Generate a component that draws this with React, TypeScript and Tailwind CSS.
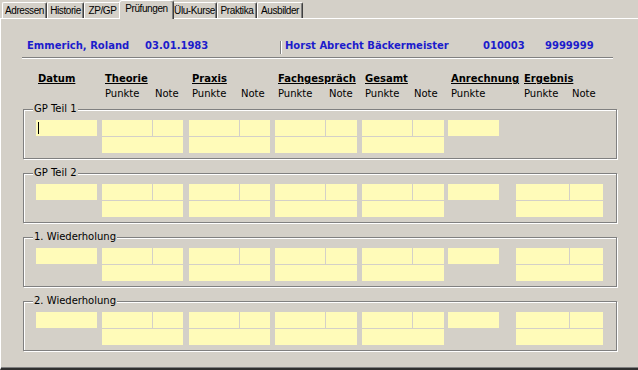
import type { ReactNode } from 'react';

const TABS = [
	{ label: 'Adressen', w: 'w-[45px]' },
	{ label: 'Historie', w: 'w-[37px]' },
	{ label: 'ZP/GP', w: 'w-[37px]' },
	{ label: 'Prüfungen', w: 'w-[55px]', active: true },
	{ label: 'Ülu-Kurse', w: 'w-[45px]' },
	{ label: 'Praktika', w: 'w-[40px]' },
	{ label: 'Ausbilder', w: 'w-[46px]' },
];

const GROUPS = [
	{ title: 'GP Teil 1', result: false, cursor: true },
	{ title: 'GP Teil 2', result: true },
	{ title: '1. Wiederholung', result: true },
	{ title: '2. Wiederholung', result: true },
];

const Cell = ({ className = '', children }: { className?: string; children?: ReactNode }) => (
	<div className={`h-[16px] bg-[#fffbb9] ${className}`}>{children}</div>
);

const Pair = ({ className, p, n }: { className: string; p: string; n: string }) => (
	<div className={`flex flex-col gap-px ${className}`}>
		<div className="flex gap-px">
			<Cell className={p} />
			<Cell className={n} />
		</div>
		<Cell />
	</div>
);

const Tabs = () => (
	<div className="h-[18px] flex items-end pl-[2px] font-['Liberation_Sans',Arial,sans-serif] text-[10px] leading-[12px] tracking-[-0.4px]">
		{TABS.map((tab) =>
			tab.active ? (
				<div
					key={tab.label}
					className={`relative z-10 -mx-[2px] -mb-px h-[19px] ${tab.w} bg-[#d4d0c8] border-t border-l border-white border-r border-r-[#404040] shadow-[inset_-1px_0_0_#808080] rounded-t-[3px] text-center pt-[2px]`}
				>
					{tab.label}
				</div>
			) : (
				<div
					key={tab.label}
					className={`h-[16px] ${tab.w} border-t border-l border-white border-r border-r-[#404040] shadow-[inset_-1px_0_0_#808080] rounded-t-[2px] text-center pt-[2px]`}
				>
					{tab.label}
				</div>
			)
		)}
	</div>
);

const App = () => {
	return (
		<div className="w-[638px] h-[370px] flex flex-col overflow-hidden bg-[#d4d0c8] text-black font-['DejaVu_Sans',sans-serif] text-[10px] leading-[12px]">
			<Tabs />

			<div className="flex-1 flex flex-col border-t border-l border-white border-b-2 border-b-[#303030] shadow-[inset_0_-1px_0_#808080]">
				{/* student / company line */}
				<div className="mt-[20px] h-[14px] flex items-center pl-[26px] font-bold text-[#1c1ccc] leading-[14px] whitespace-nowrap">
					<span className="w-[118px]">Emmerich, Roland</span>
					<span className="w-[135px]">03.01.1983</span>
					<div className="w-[2px] h-[13px] border-l border-[#808080] border-r border-r-white mt-[2px]" />
					<span className="ml-[3px] w-[198px]">Horst Abrecht Bäckermeister</span>
					<span className="w-[62px]">010003</span>
					<span>9999999</span>
				</div>
				<div className="mt-[4px] ml-[21px] w-[591px] h-[2px] border-t border-[#808080] border-b border-b-white" />

				{/* column headings */}
				<div className="mt-[14px] flex pl-[35px] font-bold underline underline-offset-[1px] whitespace-nowrap">
					<div className="w-[61px] pl-[2px]">Datum</div>
					<div className="ml-[5px] w-[81px] pl-[3px]">Theorie</div>
					<div className="ml-[6px] w-[81px] pl-[3px]">Praxis</div>
					<div className="ml-[5px] w-[82px] pl-[3px]">Fachgespräch</div>
					<div className="ml-[5px] w-[82px] pl-[3px]">Gesamt</div>
					<div className="ml-[4px] w-[51px] pl-[3px]">Anrechnung</div>
					<div className="ml-[17px] w-[87px] pl-[8px]">Ergebnis</div>
				</div>
				<div className="mt-[3px] flex pl-[35px] whitespace-nowrap">
					<div className="w-[61px]" />
					<div className="ml-[5px] w-[51px] pl-[3px]">Punkte</div>
					<div className="w-[30px] pl-[2px]">Note</div>
					<div className="ml-[6px] w-[51px] pl-[3px]">Punkte</div>
					<div className="w-[30px] pl-[1px]">Note</div>
					<div className="ml-[5px] w-[51px] pl-[3px]">Punkte</div>
					<div className="w-[31px] pl-[3px]">Note</div>
					<div className="ml-[5px] w-[51px] pl-[3px]">Punkte</div>
					<div className="w-[31px] pl-[1px]">Note</div>
					<div className="ml-[4px] w-[51px] pl-[3px]">Punkte</div>
					<div className="ml-[17px] w-[54px] pl-[8px]">Punkte</div>
					<div className="w-[33px] pl-[2px]">Note</div>
				</div>

				{/* exam groups */}
				<div className="mt-[9px] flex flex-col gap-[14px]">
					{GROUPS.map((g) => (
						<div
							key={g.title}
							className="relative ml-[22px] w-[594px] h-[50px] border border-[#808080] shadow-[inset_1px_1px_0_#fff,1px_1px_0_#fff] pt-[10px] pl-[12px]"
						>
							<span className="absolute -top-[7px] left-[9px] px-px bg-[#d4d0c8] whitespace-nowrap">
								{g.title}
							</span>
							<div className="flex">
								<div className="w-[61px]">
									<Cell className="pt-[2px] pl-[2px]">
										{g.cursor && <div className="w-px h-[12px] bg-black" />}
									</Cell>
								</div>
								<Pair className="ml-[5px] w-[81px]" p="w-[50px]" n="w-[30px]" />
								<Pair className="ml-[6px] w-[81px]" p="w-[50px]" n="w-[30px]" />
								<Pair className="ml-[5px] w-[82px]" p="w-[50px]" n="w-[31px]" />
								<Pair className="ml-[5px] w-[82px]" p="w-[50px]" n="w-[31px]" />
								<div className="ml-[4px] w-[51px]">
									<Cell />
								</div>
								{g.result && <Pair className="ml-[17px] w-[87px]" p="w-[53px]" n="w-[33px]" />}
							</div>
						</div>
					))}
				</div>
			</div>
		</div>
	);
};

export default App;
